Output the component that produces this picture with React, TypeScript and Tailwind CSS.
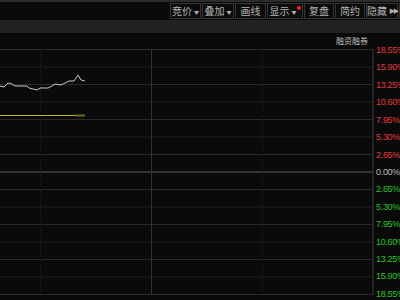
import React from 'react'

const TOOLS: { label: string; arrow?: boolean; dot?: boolean; w: string; more?: boolean }[] = [
  { label: '竞价', arrow: true, w: 'w-[31px]' },
  { label: '叠加', arrow: true, w: 'w-[32px]' },
  { label: '画线', w: 'w-[31px]' },
  { label: '显示', arrow: true, dot: true, w: 'w-[36px]' },
  { label: '复盘', w: 'w-[30px]' },
  { label: '简约', w: 'w-[30px]' },
  { label: '隐藏', more: true, w: 'w-[32px]' },
  { label: '', w: 'w-[10px]' },
]

const UP = ['18.55%', '15.90%', '13.25%', '10.60%', '7.95%', '5.30%', '2.65%']
const DOWN = ['2.65%', '5.30%', '7.95%', '10.60%', '13.25%', '15.90%', '18.55%']

const PRICE = '0,37 4,38 7,35 8,34 12,35 15,37 27,37 29,39 33,40 37,41 40,39 48,39 52,37 55,35 61,36 65,34 69,32 74,32 78,26 81,31 85,32'

export default function App() {
  return (
    <div className="w-[400px] h-[300px] overflow-hidden bg-[#0a0a0a] flex flex-col font-['Noto_Sans_CJK_SC',sans-serif]">
      <div className="h-[2px] bg-[#2c2c2c]" />

      {/* Toolbar */}
      <div className="h-[18px] flex items-start pl-[170px] pt-[1px] gap-[1px]">
        {TOOLS.map((t, i) => (
          <div
            key={i}
            className={`${t.w} shrink-0 h-[16px] border border-[#353535] bg-[#0c0c0c] relative flex items-center justify-center gap-[2px] text-[10px] leading-none text-[#b4b4b4]`}
          >
            <span>{t.label}</span>
            {t.arrow && <span className={`text-[5px] ${t.dot ? 'mr-[4px]' : ''}`}>▼</span>}
            {t.more && <span className="text-[6px] tracking-[-2px]">▶▶</span>}
            {t.dot && <span className="absolute right-[1px] top-[2px] w-[4px] h-[4px] rounded-full bg-[#ff2020]" />}
          </div>
        ))}
      </div>

      <div className="h-[13px] bg-[#212121]" />

      {/* header */}
      <div className="h-[16px] flex items-center justify-end pr-[32px]">
        <span className="text-[8px] leading-none text-[#bdbdbd]">融资融券</span>
      </div>

      {/* Chart */}
      <div className="flex flex-1">
        <svg width="374" height="251" className="shrink-0">
          {Array.from({ length: 15 }).map((_, i) => (
            <line
              key={i}
              x1="0"
              x2="373"
              y1={i * 17.5 + 0.5}
              y2={i * 17.5 + 0.5}
              stroke={i === 7 ? '#424242' : i % 2 ? '#1f1f1f' : '#2a2a2a'}
              strokeWidth={i === 7 ? 1.5 : 1}
            />
          ))}
          <line x1="40.5" x2="40.5" y1="0" y2="245" stroke="#1a1a1a" strokeDasharray="3 2" />
          <line x1="151.5" x2="151.5" y1="0" y2="245" stroke="#333333" />
          <line x1="262.5" x2="262.5" y1="0" y2="245" stroke="#1a1a1a" strokeDasharray="3 2" />
          <line x1="373" x2="373" y1="0" y2="246" stroke="#3a3a3a" />
          <polyline points={PRICE} fill="none" stroke="#c8c8c8" strokeWidth="1" />
          <line x1="0" x2="76" y1="66.5" y2="66.5" stroke="#b8b82c" strokeWidth="1" />
          <line x1="76" x2="85" y1="66.5" y2="66.5" stroke="#6a6a12" strokeWidth="2" />
        </svg>

        <div className="-mt-[4px] h-[254px] flex flex-col justify-between pl-[2px] font-['Liberation_Sans',sans-serif] text-[9px] leading-[10px] tracking-[-0.3px] whitespace-nowrap">
          {UP.map((v, i) => (
            <span key={'u' + i} className="text-[#e03c3c]">{v}</span>
          ))}
          <span className="text-[#b8b8b8]">0.00%</span>
          {DOWN.map((v, i) => (
            <span key={'d' + i} className="text-[#2ec22e]">{v}</span>
          ))}
        </div>
      </div>
    </div>
  )
}
